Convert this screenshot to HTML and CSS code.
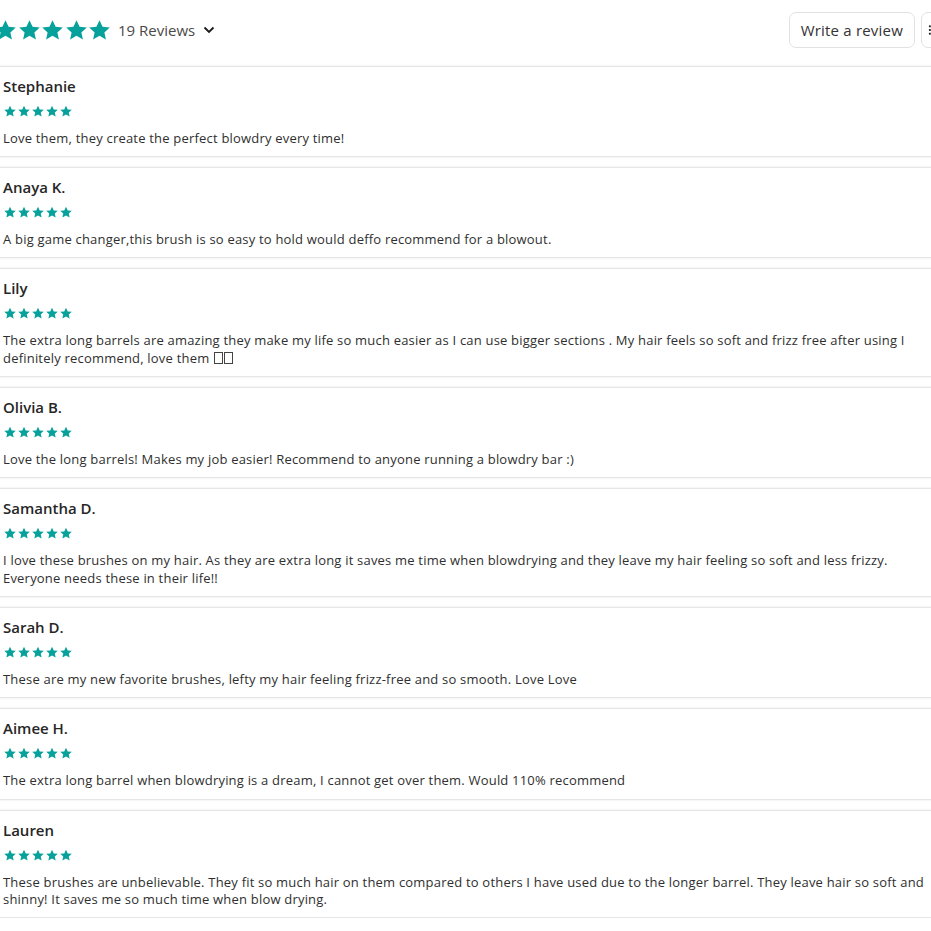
FILE: index.html
```html
<!DOCTYPE html>
<html>
<head>
<meta charset="utf-8">
<link rel="stylesheet" href="styles.css">
</head>
<body>
<svg width="0" height="0" class="defs">
  <defs>
    <symbol id="star" viewBox="0 0 24 24"><path d="M12 1.2l3.2 6.9 7.5.8-5.6 5.1 1.6 7.4L12 17.6l-6.7 3.8 1.6-7.4-5.6-5.1 7.5-.8z"/></symbol>
  </defs>
</svg>
<div class="widget">
  <header class="summary">
    <div class="summary-left">
      <div class="stars big">
        <svg><use href="#star"/></svg><svg><use href="#star"/></svg><svg><use href="#star"/></svg><svg><use href="#star"/></svg><svg><use href="#star"/></svg>
      </div>
      <span class="count">19 Reviews</span>
      <svg class="chevron" viewBox="0 0 12 8"><path d="M1.5 1.5l4.5 4.5 4.5-4.5"/></svg>
    </div>
    <div class="summary-right">
      <button class="btn">Write a review</button>
      <button class="btn icon-btn"><svg viewBox="0 0 14 14"><rect x="1" y="2" width="2" height="2"/><rect x="5" y="2" width="8" height="2"/><rect x="1" y="6" width="2" height="2"/><rect x="5" y="6" width="8" height="2"/><rect x="1" y="10" width="2" height="2"/><rect x="5" y="10" width="8" height="2"/></svg></button>
    </div>
  </header>

  <div class="reviews">
    <article class="review">
      <div class="name">Stephanie</div>
      <div class="stars small"><svg><use href="#star"/></svg><svg><use href="#star"/></svg><svg><use href="#star"/></svg><svg><use href="#star"/></svg><svg><use href="#star"/></svg></div>
      <p class="text">Love them, they create the perfect blowdry every time!</p>
    </article>
    <article class="review">
      <div class="name">Anaya K.</div>
      <div class="stars small"><svg><use href="#star"/></svg><svg><use href="#star"/></svg><svg><use href="#star"/></svg><svg><use href="#star"/></svg><svg><use href="#star"/></svg></div>
      <p class="text">A big game changer,this brush is so easy to hold would deffo recommend for a blowout.</p>
    </article>
    <article class="review">
      <div class="name">Lily</div>
      <div class="stars small"><svg><use href="#star"/></svg><svg><use href="#star"/></svg><svg><use href="#star"/></svg><svg><use href="#star"/></svg><svg><use href="#star"/></svg></div>
      <p class="text">The extra long barrels are amazing they make my life so much easier as I can use bigger sections . My hair feels so soft and frizz free after using I definitely recommend, love them <span class="tofu"></span><span class="tofu"></span></p>
    </article>
    <article class="review">
      <div class="name">Olivia B.</div>
      <div class="stars small"><svg><use href="#star"/></svg><svg><use href="#star"/></svg><svg><use href="#star"/></svg><svg><use href="#star"/></svg><svg><use href="#star"/></svg></div>
      <p class="text">Love the long barrels! Makes my job easier! Recommend to anyone running a blowdry bar :)</p>
    </article>
    <article class="review">
      <div class="name">Samantha D.</div>
      <div class="stars small"><svg><use href="#star"/></svg><svg><use href="#star"/></svg><svg><use href="#star"/></svg><svg><use href="#star"/></svg><svg><use href="#star"/></svg></div>
      <p class="text">I love these brushes on my hair. As they are extra long it saves me time when blowdrying and they leave my hair feeling so soft and less frizzy. Everyone needs these in their life!!</p>
    </article>
    <article class="review">
      <div class="name">Sarah D.</div>
      <div class="stars small"><svg><use href="#star"/></svg><svg><use href="#star"/></svg><svg><use href="#star"/></svg><svg><use href="#star"/></svg><svg><use href="#star"/></svg></div>
      <p class="text">These are my new favorite brushes, lefty my hair feeling frizz-free and so smooth. Love Love</p>
    </article>
    <article class="review">
      <div class="name">Aimee H.</div>
      <div class="stars small"><svg><use href="#star"/></svg><svg><use href="#star"/></svg><svg><use href="#star"/></svg><svg><use href="#star"/></svg><svg><use href="#star"/></svg></div>
      <p class="text">The extra long barrel when blowdrying is a dream, I cannot get over them. Would 110% recommend</p>
    </article>
    <article class="review">
      <div class="name">Lauren</div>
      <div class="stars small"><svg><use href="#star"/></svg><svg><use href="#star"/></svg><svg><use href="#star"/></svg><svg><use href="#star"/></svg><svg><use href="#star"/></svg></div>
      <p class="text">These brushes are unbelievable. They fit so much hair on them compared to others I have used due to the longer barrel. They leave hair so soft and shinny! It saves me so much time when blow drying.</p>
    </article>
  </div>
</div>
</body>
</html>
```
FILE: styles.css
```css
html, body {
  margin: 0;
  padding: 0;
  background: #ffffff;
  overflow: hidden;
}
body {
  font-family: "Open Sans", "Liberation Sans", sans-serif;
  color: #2b2b2b;
}
.defs {
  position: absolute;
  width: 0;
  height: 0;
}
.widget {
  width: 931px;
}
.summary {
  height: 60px;
  padding-bottom: 6px;
  display: flex;
  align-items: center;
  justify-content: space-between;
}
.summary-left {
  display: flex;
  align-items: center;
  margin-left: -6px;
}
.stars {
  display: flex;
  fill: #06a19b;
}
.stars.big {
  gap: 0.5px;
}
.stars.big svg {
  width: 23px;
  height: 23px;
}
.count {
  margin-left: 7px;
  font-size: 15px;
  color: #4a4a4a;
}
.chevron {
  width: 12px;
  height: 8px;
  margin-left: 8px;
  fill: none;
  stroke: #1a1a1a;
  stroke-width: 1.8;
}
.summary-right {
  display: flex;
  align-items: center;
  gap: 6px;
  margin-right: -26px;
}
.btn {
  height: 36px;
  padding: 0 11px;
  border: 1px solid #e2e2e2;
  border-radius: 7px;
  background: #fff;
  font-family: inherit;
  font-size: 15px;
  color: #333;
  letter-spacing: 0.2px;
}
.icon-btn {
  width: 36px;
  padding: 0 0 0 6px;
  display: flex;
  align-items: center;
}
.icon-btn svg {
  width: 13px;
  height: 14px;
  fill: #222;
}
.reviews {
  display: flex;
  flex-direction: column;
  gap: 10px;
}
.review {
  padding: 9px 0 8.6px 3px;
  border-top: 1px solid #e6e6e6;
  border-bottom: 1px solid #e6e6e6;
  box-shadow: 0 1px 1px rgba(0, 0, 0, 0.03), 0 -1px 1px rgba(0, 0, 0, 0.03);
}
.name {
  font-size: 15px;
  font-weight: 600;
  line-height: 21px;
  color: #262626;
}
.stars.small {
  margin-top: 8px;
  gap: 0;
}
.stars.small svg {
  width: 14px;
  height: 13px;
}
.text {
  margin: 12px 0 0;
  font-size: 13px;
  line-height: 17.6px;
  color: #2f2f2f;
  letter-spacing: 0.2px;
}
.tofu {
  display: inline-block;
  width: 7px;
  height: 10px;
  border: 1px solid #444;
  margin-left: 1px;
  vertical-align: -1px;
}
```
